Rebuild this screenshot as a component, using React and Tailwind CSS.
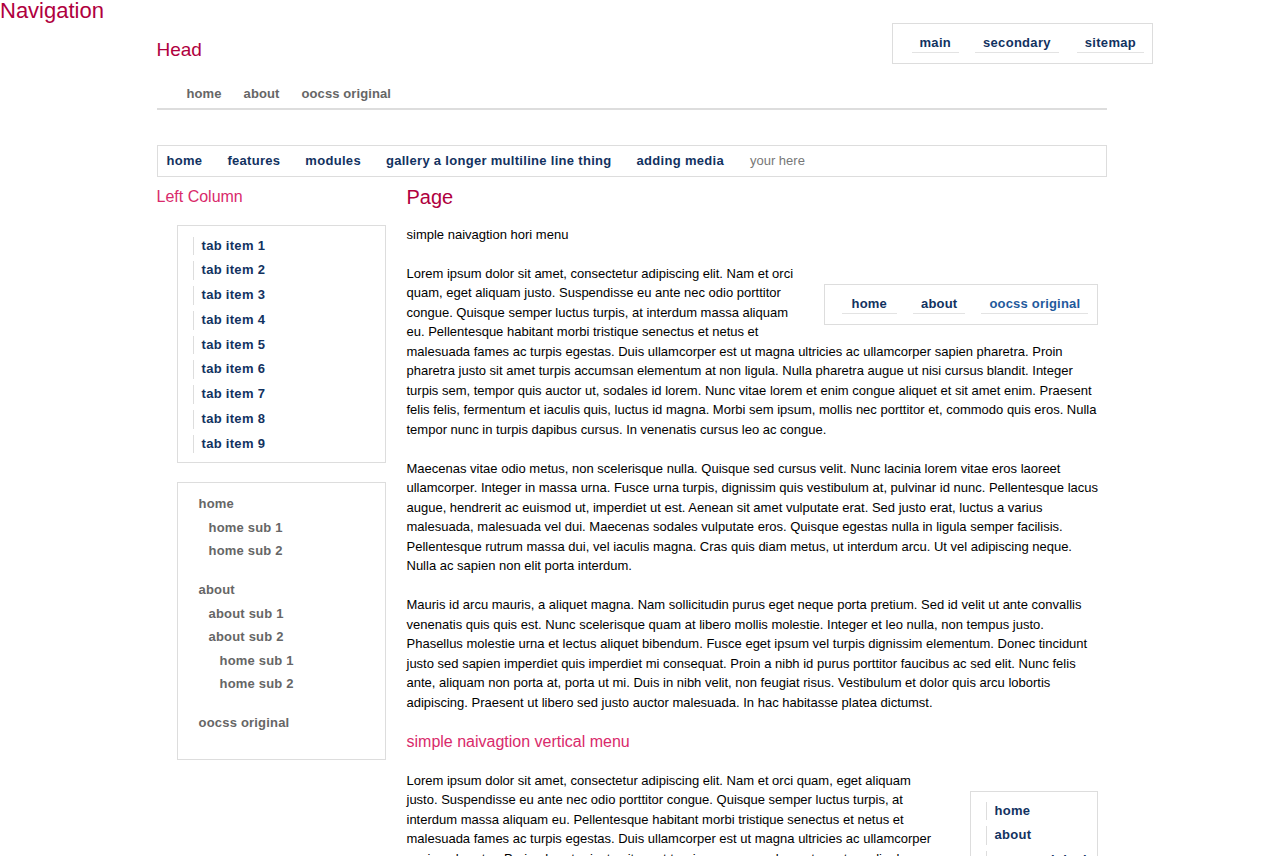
import "react";

const navy = "text-[#12325f]";

function UnderItem({ children, className = "" }) {
  return (
    <li className={`border-b border-[#e3e3e3] px-[8px] leading-[18px] ${className}`}>
      {children}
    </li>
  );
}

function TabItem({ children }) {
  return (
    <li className="py-[3px]">
      <span className="block border-l border-[#dddddd] pl-[8px] leading-[18.75px]">{children}</span>
    </li>
  );
}

function Lines({ lines }) {
  return lines.map((l, i) => (
    <span key={i}>
      {l}
      {i < lines.length - 1 && <br />}
    </span>
  ));
}

const lorem1 = [
  "Lorem ipsum dolor sit amet, consectetur adipiscing elit. Nam et orci",
  "quam, eget aliquam justo. Suspendisse eu ante nec odio porttitor",
  "congue. Quisque semper luctus turpis, at interdum massa aliquam",
  "eu. Pellentesque habitant morbi tristique senectus et netus et",
  "malesuada fames ac turpis egestas. Duis ullamcorper est ut magna ultricies ac ullamcorper sapien pharetra. Proin",
  "pharetra justo sit amet turpis accumsan elementum at non ligula. Nulla pharetra augue ut nisi cursus blandit. Integer",
  "turpis sem, tempor quis auctor ut, sodales id lorem. Nunc vitae lorem et enim congue aliquet et sit amet enim. Praesent",
  "felis felis, fermentum et iaculis quis, luctus id magna. Morbi sem ipsum, mollis nec porttitor et, commodo quis eros. Nulla",
  "tempor nunc in turpis dapibus cursus. In venenatis cursus leo ac congue.",
];
const lorem2 = [
  "Maecenas vitae odio metus, non scelerisque nulla. Quisque sed cursus velit. Nunc lacinia lorem vitae eros laoreet",
  "ullamcorper. Integer in massa urna. Fusce urna turpis, dignissim quis vestibulum at, pulvinar id nunc. Pellentesque lacus",
  "augue, hendrerit ac euismod ut, imperdiet ut est. Aenean sit amet vulputate erat. Sed justo erat, luctus a varius",
  "malesuada, malesuada vel dui. Maecenas sodales vulputate eros. Quisque egestas nulla in ligula semper facilisis.",
  "Pellentesque rutrum massa dui, vel iaculis magna. Cras quis diam metus, ut interdum arcu. Ut vel adipiscing neque.",
  "Nulla ac sapien non elit porta interdum.",
];
const lorem3 = [
  "Mauris id arcu mauris, a aliquet magna. Nam sollicitudin purus eget neque porta pretium. Sed id velit ut ante convallis",
  "venenatis quis quis est. Nunc scelerisque quam at libero mollis molestie. Integer et leo nulla, non tempus justo.",
  "Phasellus molestie urna et lectus aliquet bibendum. Fusce eget ipsum vel turpis dignissim elementum. Donec tincidunt",
  "justo sed sapien imperdiet quis imperdiet mi consequat. Proin a nibh id purus porttitor faucibus ac sed elit. Nunc felis",
  "ante, aliquam non porta at, porta ut mi. Duis in nibh velit, non feugiat risus. Vestibulum et dolor quis arcu lobortis",
  "adipiscing. Praesent ut libero sed justo auctor malesuada. In hac habitasse platea dictumst.",
];
const lorem4 = [
  "Lorem ipsum dolor sit amet, consectetur adipiscing elit. Nam et orci quam, eget aliquam",
  "justo. Suspendisse eu ante nec odio porttitor congue. Quisque semper luctus turpis, at",
  "interdum massa aliquam eu. Pellentesque habitant morbi tristique senectus et netus et",
  "malesuada fames ac turpis egestas. Duis ullamcorper est ut magna ultricies ac ullamcorper",
  "sapien pharetra. Proin pharetra justo sit amet turpis accumsan elementum at non ligula. Nulla",
  "pharetra augue ut nisi cursus blandit.",
];

export default function App() {
  return (
    <div className="h-[856px] overflow-hidden bg-white font-['Liberation_Sans',Arial,sans-serif] text-[13px] leading-[19.5px] text-black">
      <h1 className="text-[22px] leading-[22px] text-[#b0003e]">Navigation</h1>

      <div className="mx-auto w-[950px]">
        {/* header */}
        <div className="border-b-2 border-[#dddddd]">
          <div className="flex items-start justify-between">
            <h2 className="mt-[17px] text-[19px] leading-[22px] text-[#b0003e]">Head</h2>
            <div className="mr-[-46px] mt-[1px] h-[41px] w-[261px] border border-[#dddddd] pl-[19px] pt-[10px]">
              <ul className={`flex gap-[16px] font-bold tracking-[0.3px] ${navy}`}>
                <UnderItem>main</UnderItem>
                <UnderItem>secondary</UnderItem>
                <UnderItem className="ml-[2px]">sitemap</UnderItem>
              </ul>
            </div>
          </div>
          <ul className="mt-[20px] flex gap-[22px] pb-[4px] pl-[30px] font-bold tracking-[0.1px] text-[#666666]">
            <li>home</li>
            <li>about</li>
            <li>oocss original</li>
          </ul>
        </div>

        {/* horizontal nav */}
        <ul className="mt-[35px] flex h-[32px] items-center gap-[25px] border border-[#dddddd] pl-[9px] font-bold tracking-[0.3px]">
          <li className={navy}>home</li>
          <li className={navy}>features</li>
          <li className={navy}>modules</li>
          <li className={navy}>gallery a longer multiline line thing</li>
          <li className={navy}>adding media</li>
          <li className="ml-[1px] font-normal tracking-normal text-[#777777]">your here</li>
        </ul>

        <div className="mt-[9px] flex">
          {/* left column */}
          <div className="w-[230px] shrink-0">
            <h3 className="text-[16px] font-light leading-[22px] text-[#d92a6b]">Left Column</h3>
            <div className="ml-[20px] mt-[17px] w-[209px] border border-[#dddddd] pb-[6px] pl-[15px] pt-[8px]">
              <ul className={`font-bold tracking-[0.3px] ${navy}`}>
                {[1, 2, 3, 4, 5, 6, 7, 8, 9].map((n) => (
                  <TabItem key={n}>tab item {n}</TabItem>
                ))}
              </ul>
            </div>
            <div className="ml-[20px] mt-[19px] w-[209px] border border-[#dddddd] pb-[24px] pl-[21px] pt-[9px] font-bold tracking-[0.2px] text-[#666666]">
              <ul className="leading-[23.5px]">
                <li>home</li>
                <li className="pl-[10px]">home sub 1</li>
                <li className="pl-[10px]">home sub 2</li>
                <li className="mt-[15.5px]">about</li>
                <li className="pl-[10px]">about sub 1</li>
                <li className="pl-[10px]">about sub 2</li>
                <li className="pl-[21px]">home sub 1</li>
                <li className="pl-[21px]">home sub 2</li>
                <li className="mt-[15.5px]">oocss original</li>
              </ul>
            </div>
          </div>

          {/* page */}
          <div className="ml-[20px] w-[700px]">
            <h3 className="text-[20px] leading-[22px] text-[#b0003e]">Page</h3>
            <p className="mt-[17px] mb-[19.5px]">simple naivagtion hori menu</p>
            <div className="float-right mb-[12px] ml-[22px] mr-[9px] mt-[20px] h-[41px] w-[274px] border border-[#dddddd] pl-[17px] pt-[10px]">
              <ul className={`flex gap-[16px] font-bold tracking-[0.2px] ${navy}`}>
                <UnderItem className="px-[10px]">home</UnderItem>
                <UnderItem>about</UnderItem>
                <UnderItem className="text-[#1f5a9c]">oocss original</UnderItem>
              </ul>
            </div>
            <p className="mb-[19.5px]"><Lines lines={lorem1} /></p>
            <p className="mb-[19.5px]"><Lines lines={lorem2} /></p>
            <p className="mb-[19.5px]"><Lines lines={lorem3} /></p>
            <h3 className="text-[16px] font-light leading-[20px] text-[#d92a6b]">simple naivagtion vertical menu</h3>
            <div className="mt-[19px]">
              <div className="float-right ml-[30px] mr-[9px] mt-[20px] w-[128px] border border-[#dddddd] pl-[15px] pt-[7px]">
                <ul className={`font-bold tracking-[0.3px] ${navy}`}>
                  <TabItem>home</TabItem>
                  <TabItem>about</TabItem>
                  <TabItem>oocss original</TabItem>
                </ul>
              </div>
              <p><Lines lines={lorem4} /></p>
            </div>
          </div>
        </div>
      </div>
    </div>
  );
}
